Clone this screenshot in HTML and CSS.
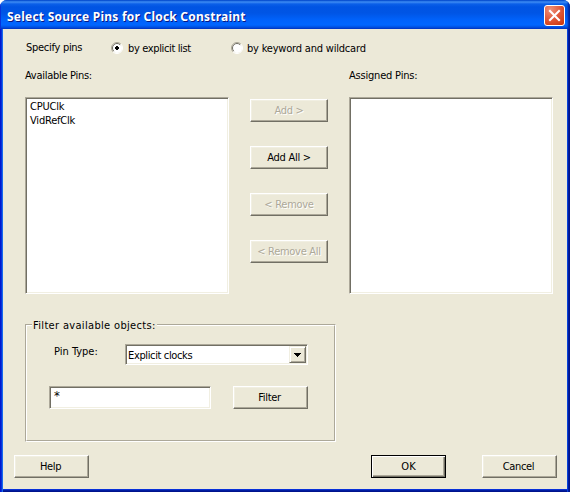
FILE: index.html
```html
<!DOCTYPE html>
<html lang="en">
<head>
<meta charset="utf-8">
<title>Select Source Pins for Clock Constraint</title>
<link rel="stylesheet" href="styles.css">
</head>
<body>
<div class="window">
  <header class="titlebar">
    <h1 class="title">Select Source Pins for Clock Constraint</h1>
    <svg class="close" width="21" height="21" viewBox="0 0 21 21">
      <defs><radialGradient id="red" cx=".3" cy=".2" r="1"><stop offset="0" stop-color="#ee9078"/><stop offset=".5" stop-color="#e0593a"/><stop offset="1" stop-color="#c93408"/></radialGradient></defs>
      <rect x=".5" y=".5" width="20" height="20" rx="2.5" fill="url(#red)" stroke="#fff"/>
      <path d="M6 6l9 9M15 6l-9 9" stroke="#fff" stroke-width="2.1" stroke-linecap="square"/>
    </svg>
  </header>
  <main class="client">
    <div class="mode">
      <span class="mode-label"><span class="t tight">Specify pins</span></span>
      <label class="option option-list"><svg class="radio" width="12" height="12" viewBox="0 0 12 12"><circle cx="6" cy="6" r="5" fill="#fff"/><path d="M2.1 9.9A5.5 5.5 0 0 1 9.9 2.1" fill="none" stroke="#aca899"/><path d="M2.8 9.2A4.5 4.5 0 0 1 9.2 2.8" fill="none" stroke="#716f64"/><path d="M9.9 2.1A5.5 5.5 0 0 1 2.1 9.9" fill="none" stroke="#fff"/><path d="M5 4h2v1h1v2H7v1H5V7H4V5h1z" fill="#000"/></svg><span class="t tighter">by explicit list</span></label>
      <label class="option option-keyword"><svg class="radio" width="12" height="12" viewBox="0 0 12 12"><circle cx="6" cy="6" r="5" fill="#fff"/><path d="M2.1 9.9A5.5 5.5 0 0 1 9.9 2.1" fill="none" stroke="#aca899"/><path d="M2.8 9.2A4.5 4.5 0 0 1 9.2 2.8" fill="none" stroke="#716f64"/><path d="M9.9 2.1A5.5 5.5 0 0 1 2.1 9.9" fill="none" stroke="#fff"/></svg><span class="t snug">by keyword and wildcard</span></label>
    </div>
    <div class="pins">
      <section class="pin-column">
        <h2 class="heading"><span class="t tight">Available Pins:</span></h2>
        <ul class="list sunken"><li><span class="t snug">CPUClk</span></li><li><span class="t snug">VidRefClk</span></li></ul>
      </section>
      <div class="transfer">
        <button class="button" disabled><span class="t tight">Add &gt;</span></button>
        <button class="button"><span class="t tight">Add All &gt;</span></button>
        <button class="button" disabled><span class="t tight">&lt; Remove</span></button>
        <button class="button" disabled><span class="t tight">&lt; Remove All</span></button>
      </div>
      <section class="pin-column">
        <h2 class="heading"><span class="t snug">Assigned Pins:</span></h2>
        <ul class="list sunken"></ul>
      </section>
    </div>
    <section class="group">
      <div class="group-inner">
        <h2 class="legend"><span class="t loose">Filter available objects:</span></h2>
        <div class="type-row">
          <span class="type-label"><span class="t">Pin Type:</span></span>
          <div class="select sunken"><span class="t tighter">Explicit clocks</span><span class="drop"><svg width="7" height="4" viewBox="0 0 7 4"><path d="M0 0h7v1H6v1H5v1H4v1H3V3H2V2H1V1H0z"/></svg></span></div>
        </div>
        <div class="filter-row">
          <div class="field sunken"><span class="t">*</span></div>
          <button class="button nudged"><span class="t tight">Filter</span></button>
        </div>
      </div>
    </section>
    <footer class="actions">
      <button class="button nudged"><span class="t tighter">Help</span></button>
      <button class="button default"><span class="t">OK</span></button>
      <button class="button cancel nudged"><span class="t tighter">Cancel</span></button>
    </footer>
  </main>
</div>
</body>
</html>
```
FILE: styles.css
```css
* { box-sizing: border-box; }
body { margin: 0; background: #fff; font: 11px/14px "DejaVu Sans Condensed", "DejaVu Sans", sans-serif; color: #000; }
h1, h2, ul { margin: 0; padding: 0; font: inherit; list-style: none; }
.window { width: 570px; height: 492px; padding: 0 3px 3px; overflow: hidden; border-radius: 7px 7px 0 0; background: linear-gradient(90deg, #0019cf 0 1px, #0831d9 1px 2px, #166aee 2px 3px, #0855dd 3px 567px, #0841d8 567px 568px, #001da0 568px 569px, #00138c 569px); }
.titlebar { display: flex; justify-content: space-between; height: 29px; margin: 0 -3px; padding: 5px 5px 0 7px; background: linear-gradient(180deg, #0058e0 0, #3f8cf3 2px, #0a5fe8 4px, #0054e3 7px, #0055e5 13px, #0062fb 20px, #0066ff 25px, #0052e4 27px, #003dd0 29px); box-shadow: inset 1px 0 #0831d9, inset -2px 0 2px #00259f; }
.title { padding-top: 1px; color: #fff; font: bold 12px/22px "Noto Sans", sans-serif; letter-spacing: .23px; text-shadow: 1px 1px #0a1883; white-space: nowrap; }
.close { display: block; }
.client { height: 460px; padding: 12px 10px 0 11px; background: #ece9d8; box-shadow: 0 1px #0831d9, 0 2px #001da0, 0 3px #00138c; }
.t { display: inline-block; white-space: nowrap; }
.snug { letter-spacing: -.2px; }
.tight { letter-spacing: -.28px; }
.tighter { letter-spacing: -.36px; }
.loose { letter-spacing: .33px; }
.mode { display: flex; padding-left: 12px; height: 27px; }
.mode-label { width: 85px; }
.option { display: flex; gap: 5px; padding-top: 1px; }
.option-list { width: 120px; }
.option-keyword { gap: 4px; }
.pins { display: flex; gap: 21px; padding-left: 11px; }
.pin-column { width: 204px; padding-top: 1px; }
.heading { height: 28px; }
.list { height: 197px; padding: 2px 4px 0; }
.sunken { background: #fff; border: 1px solid; border-color: #aca899 #fff #fff #aca899; box-shadow: inset 1px 1px #716f64, inset -1px -1px #f1efe2; }
.transfer { display: flex; flex-direction: column; gap: 24px; width: 78px; padding-top: 31px; }
.button { display: flex; align-items: center; justify-content: center; width: 75px; height: 23px; padding: 0; font: inherit; color: #000; background: #ece9d8; border: 1px solid; border-color: #fff #716f64 #716f64 #fff; border-radius: 0; box-shadow: inset -1px -1px #aca899, inset 1px 1px #f1efe2; }
.transfer .button { width: 78px; }
.button:disabled { color: #aca899; text-shadow: 1px 1px #fff; }
.default { border-color: #000; box-shadow: inset 1px 1px #fff, inset -1px -1px #716f64, inset -2px -2px #aca899; }
.nudged { padding-right: 2px; }
.group { width: 311px; height: 118px; margin: 30px 0 0 11px; border: 1px solid; border-color: #aca899 #fff #fff #aca899; }
.group-inner { height: 116px; border: 1px solid; border-color: #fff #aca899 #aca899 #fff; }
.legend { width: 125px; height: 15px; margin: -8px 0 0 5px; padding: 1px 0 0 1px; background: #ece9d8; }
.type-row { display: flex; margin-top: 11px; padding-left: 27px; }
.type-label { width: 71px; padding-top: 1px; }
.select { display: flex; justify-content: space-between; width: 183px; height: 21px; padding: 4px 1px 1px 2px; }
.drop { display: flex; align-items: center; justify-content: center; width: 17px; height: 17px; margin-top: -3px; background: #ece9d8; border: 1px solid; border-color: #f1efe2 #716f64 #716f64 #f1efe2; box-shadow: inset 1px 1px #fff, inset -1px -1px #aca899; }
.filter-row { display: flex; gap: 22px; margin-top: 21px; padding-left: 22px; }
.field { width: 162px; height: 23px; padding: 2px 4px; font-size: 13px; }
.actions { display: flex; padding-top: 13px; }
.default { margin-left: 282px; }
.cancel { margin-left: 36px; }
```
